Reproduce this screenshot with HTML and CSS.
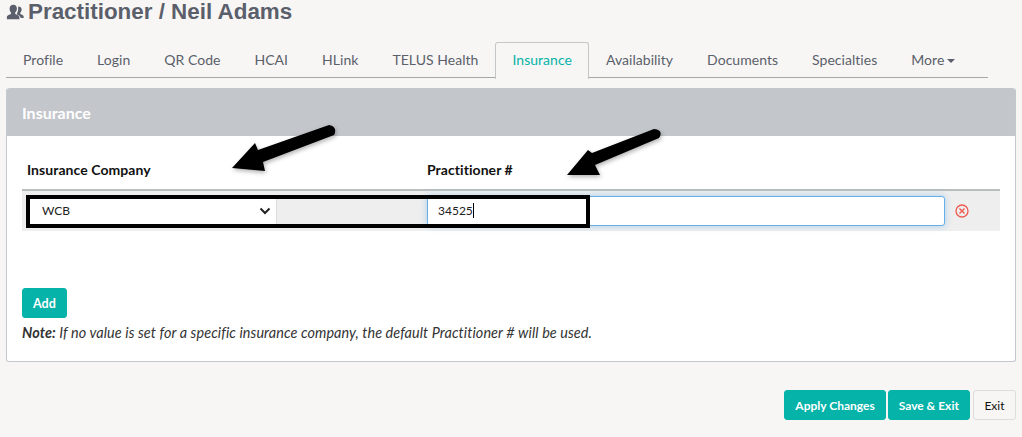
FILE: index.html
```html
<!DOCTYPE html>
<html lang="en">
<head>
    <meta charset="UTF-8">
    <title>Practitioner / Neil Adams</title>
    <link rel="stylesheet" href="styles.css">
</head>
<body>

    <!-- Page title -->
    <h1 class="page-title">
        <svg class="title-icon" width="18" height="18" viewBox="0 0 16 16">
            <path fill="#5a5f6b" d="M6.500 1.500c2 0 3.200 1.400 3.200 3.300 0 1.500-.6 2.800-1.500 3.500v1.500c1.200.5 3.300 1 3.600 2.300l.2 2.400H.8v-2.400c.3-1.300 2.500-1.800 3.600-2.300V8.300C3.500 7.600 3.200 6.300 3.200 4.800c0-1.900 1.300-3.300 3.300-3.300z"/>
            <path fill="#5a5f6b" d="M11 3c1.700 0 2.900 1.100 2.900 2.800 0 1.200-.5 2.200-1.200 2.800v1.200c1 .5 2.700.8 3 2v1.600h-2.600c-.2-1.800-1.900-2.500-3.300-3.200V9c.8-1 1.200-2.700 1-4.500z"/>
        </svg>
        Practitioner / Neil Adams
    </h1>

    <!-- Tabs -->
    <ul class="tabs">
        <li class="tab">Profile</li>
        <li class="tab">Login</li>
        <li class="tab">QR Code</li>
        <li class="tab">HCAI</li>
        <li class="tab">HLink</li>
        <li class="tab">TELUS Health</li>
        <li class="tab active">Insurance</li>
        <li class="tab">Availability</li>
        <li class="tab">Documents</li>
        <li class="tab">Specialties</li>
        <li class="tab">More <span class="caret"></span></li>
    </ul>

    <!-- Insurance panel -->
    <div class="panel">
        <div class="panel-heading">Insurance</div>
        <div class="panel-body">
            <div class="table-head">
                <div class="col-company">Insurance Company</div>
                <div class="col-number">Practitioner #</div>
            </div>
            <div class="table-row">
                <div class="col-company">
                    <div class="select-box">
                        <span>WCB</span>
                        <svg width="12" height="8" viewBox="0 0 12 8"><path d="M1.500 1.500 6 6l4.500-4.500" fill="none" stroke="#222" stroke-width="2"/></svg>
                    </div>
                </div>
                <div class="col-number">
                    <div class="text-box">34525<span class="text-cursor"></span></div>
                </div>
                <div class="col-remove">
                    <svg width="14" height="14" viewBox="0 0 14 14">
                        <circle cx="7" cy="7" r="6" fill="none" stroke="#ee5a4f" stroke-width="1.300"/>
                        <path d="M4.500 4.500l5 5M9.500 4.500l-5 5" stroke="#ee5a4f" stroke-width="1.400"/>
                    </svg>
                </div>
            </div>
            <button class="btn btn-add">Add</button>
            <p class="note"><b>Note:</b> If no value is set for a specific insurance company, the default Practitioner # will be used.</p>
        </div>
    </div>

    <!-- Footer buttons -->
    <div class="actions">
        <button class="btn">Apply Changes</button>
        <button class="btn">Save &amp; Exit</button>
        <button class="btn btn-plain">Exit</button>
    </div>

    <!-- Screenshot annotations -->
    <div class="mark-box"></div>
    <svg class="mark-arrows" width="1022" height="437" viewBox="0 0 1022 437">
        <g fill="#000">
            <path d="M329 125 258 150 255 143 232 168 265 171 263 162 334 135Q338 127 329 125z"/>
            <path d="M654 129 592 153 588 150 567 175 600 175 595 165 659 138Q664 130 654 129z"/>
        </g>
    </svg>

</body>
</html>
```

FILE: styles.css
```css
/* Basic Reset */
* {
    margin: 0;
    padding: 0;
    box-sizing: border-box;
}

body {
    background-color: #f8f6f4;
    color: #111;
    font-family: Lato, sans-serif;
    font-size: 13px;
    height: 437px;
    overflow: hidden;
    position: relative;
}

/* Page title */
.page-title {
    display: flex;
    align-items: center;
    gap: 4px;
    height: 24px;
    padding-left: 6px;
    font-family: "Liberation Sans", Arial, sans-serif;
    font-size: 22.400px;
    font-weight: bold;
    color: #5a5f6b;
}

/* Tabs */
.tabs {
    display: flex;
    list-style: none;
    height: 36px;
    margin: 18px 34px 0 6px;
    border-bottom: 1px solid #a3a8a9;
}

.tab {
    height: 36px;
    padding: 8px 16px 0;
    border: 1px solid transparent;
    border-bottom: none;
    font-size: 14px;
    letter-spacing: 0.035px;
    line-height: 18px;
    color: #5a5f6b;
}

.tab.active {
    height: 37px;
    background-color: #f8f6f4;
    border-color: #c4c7ca;
    border-radius: 3px 3px 0 0;
    color: #05b3a9;
}

.caret {
    display: inline-block;
    width: 0;
    height: 0;
    margin-left: -1px;
    vertical-align: middle;
    border-top: 4px solid #5a5f6b;
    border-left: 4px solid transparent;
    border-right: 4px solid transparent;
}

/* Insurance panel */
.panel {
    height: 274px;
    margin: 10px 6px 0;
    background-color: #fff;
    border: 1px solid #c4c7cd;
    border-top: none;
    border-radius: 3px;
}

.panel-heading {
    height: 48px;
    padding: 16px 15px 0;
    background-color: #c3c6cb;
    border-radius: 3px 3px 0 0;
    font-size: 16px;
    font-weight: bold;
    line-height: 18px;
    color: #fff;
}

.panel-body {
    padding: 0 15px;
}

.table-head {
    display: flex;
    height: 55px;
    padding-top: 26px;
    border-bottom: 2px solid #b9bfbf;
    font-size: 14px;
    font-weight: bold;
    letter-spacing: 0.060px;
    line-height: 16px;
}

.col-company {
    width: 405px;
    padding-left: 5px;
}

.col-number {
    width: 518px;
}

.col-remove {
    display: flex;
    flex: 1;
    align-items: center;
    padding-left: 10px;
}

.table-row {
    display: flex;
    align-items: center;
    height: 40px;
    background-color: #eee;
}

.select-box {
    display: flex;
    justify-content: space-between;
    align-items: center;
    width: 250px;
    height: 30px;
    padding: 0 5px 1px 15px;
    background-color: #fff;
    border-right: 1px solid #ddd;
    font-size: 12px;
    color: #222;
}

.text-box {
    display: flex;
    align-items: center;
    height: 30px;
    padding: 0 0 1px 10px;
    background-color: #fff;
    border: 1px solid #66afe9;
    border-radius: 3px;
    box-shadow: 0 0 6px rgba(102, 175, 233, 0.5);
    font-size: 12px;
    color: #222;
}

.text-cursor {
    width: 1px;
    height: 15px;
    background-color: #000;
}

/* Buttons */
.btn {
    height: 30px;
    padding: 0 10px;
    background-color: #05b3a9;
    border: 1px solid #05b3a9;
    border-radius: 3px;
    font-family: Lato, sans-serif;
    font-size: 12px;
    font-weight: bold;
    color: #fff;
}

.btn-add {
    display: block;
    margin-top: 57px;
    font-size: 12.500px;
}

.btn-plain {
    margin-left: 1px;
    padding: 0 10.500px;
    background-color: #f8f6f4;
    border-color: #ddd;
    font-weight: normal;
    color: #111;
}

.note {
    margin-top: 6px;
    font-size: 14.400px;
    font-style: italic;
    letter-spacing: 0.100px;
    line-height: 17px;
    color: #333;
}

/* Footer buttons */
.actions {
    display: flex;
    justify-content: flex-end;
    gap: 2px;
    margin: 28px 6px 0;
}

/* Screenshot annotations */
.mark-box {
    position: absolute;
    left: 26px;
    top: 195px;
    width: 564px;
    height: 33px;
    border: 4px solid #000;
}

.mark-arrows {
    position: absolute;
    left: 0;
    top: 0;
    filter: drop-shadow(1px 2px 2px rgba(0, 0, 0, 0.3));
}
```
